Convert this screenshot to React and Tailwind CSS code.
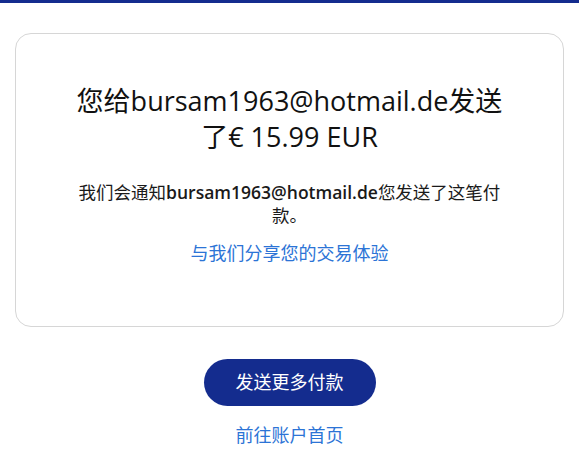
export default function App() {
  const font = { fontFamily: '"Open Sans", "Noto Sans CJK SC", sans-serif' };
  return (
    <div className="min-h-[475px] bg-white text-[#1a1a1a]" style={font}>
      <div className="h-[3px] bg-[#142c8e]" />
      <div className="px-[15px] pt-[30px]">
        <div className="flex flex-col items-center rounded-2xl border border-[#d6d6d6] px-[58px] pt-[49px] pb-[61px] text-center">
          <h1 className="text-[27px] leading-[36px] font-normal text-[#111]">
            您给bursam1963@hotmail.de发送了€ 15.99 EUR
          </h1>
          <p className="mt-[26px] text-[17.5px] leading-[23px]">
            我们会通知<span className="font-semibold">bursam1963@hotmail.de</span>您发送了这笔付款。
          </p>
          <a href="#" className="mt-[14px] text-[18px] leading-[24px] text-[#2c74d6]">
            与我们分享您的交易体验
          </a>
        </div>
      </div>
      <div className="mt-[32px] flex flex-col items-center">
        <button className="h-[47px] w-[172px] rounded-full bg-[#142c8e] text-[18px] text-white">
          发送更多付款
        </button>
        <a href="#" className="mt-[17px] text-[18px] leading-[24px] text-[#2c74d6]">
          前往账户首页
        </a>
      </div>
    </div>
  );
}
